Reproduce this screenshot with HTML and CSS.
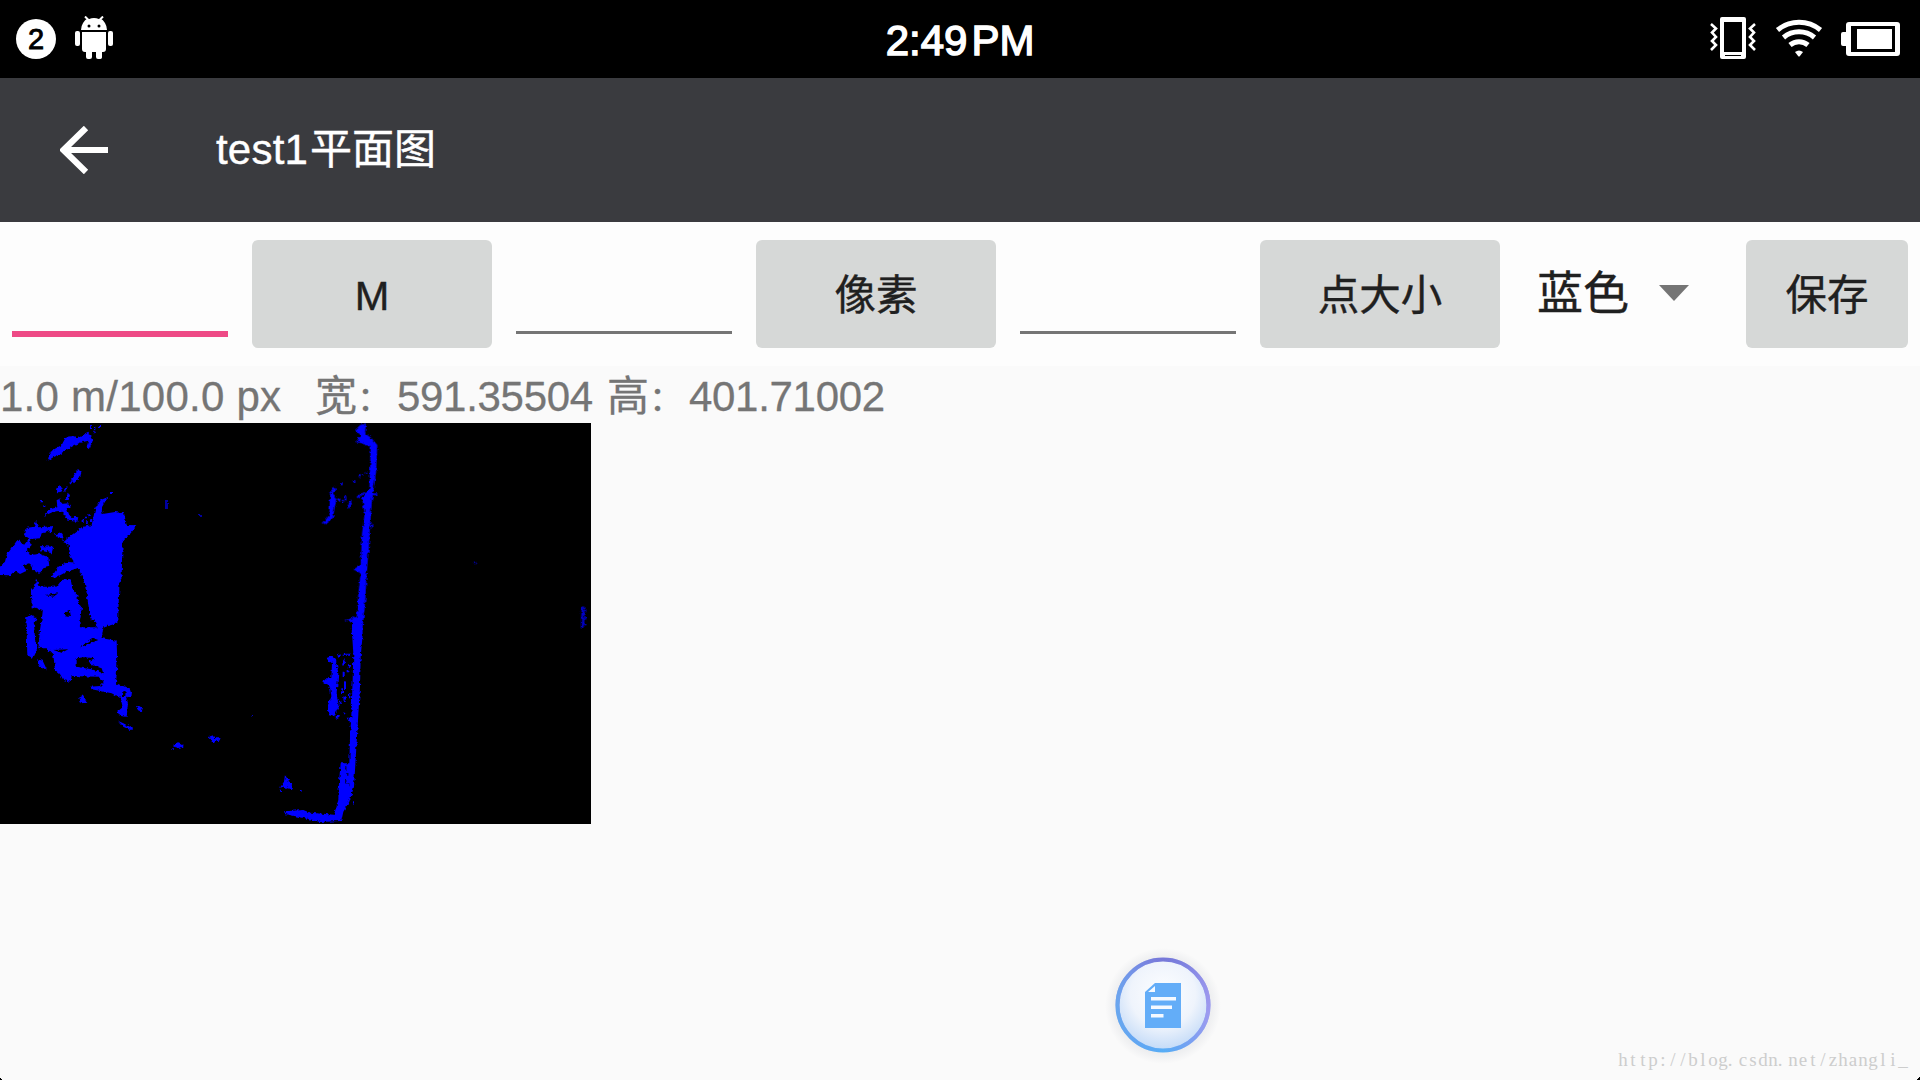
FILE: index.html
```html
<!DOCTYPE html>
<html lang="zh">
<head>
<meta charset="utf-8">
<title>test1平面图</title>
<link rel="stylesheet" href="styles.css">
</head>
<body>
<header class="status">
  <div class="status-left">
    <span class="count">2</span>
    <svg class="android" width="40" height="44" viewBox="74 16 40 44" fill="#fff">
      <path d="M82 30c0-5 3-9 6-10.500l-3-3M106 30c0-5-3-9-6-10.500l3-3" fill="none" stroke="#fff" stroke-width="2"/>
      <path d="M82 30c0-7 5-12 12-12s12 5 12 12z"/>
      <circle cx="89" cy="26" r="1.500" fill="#000"/><circle cx="99" cy="26" r="1.500" fill="#000"/>
      <path d="M82 32h24v17a3 3 0 0 1-3 3h-1v5.500a2 2 0 0 1-2 1.500h-2a2 2 0 0 1-2-2v-5h-4v5a2 2 0 0 1-2 2h-2a2 2 0 0 1-2-2v-5h-1a3 3 0 0 1-3-3z"/>
      <rect x="75" y="31" width="5" height="15" rx="2"/><rect x="108" y="31" width="5" height="15" rx="2"/>
    </svg>
  </div>
  <div class="time"><span>2:49</span><span>PM</span></div>
  <svg class="status-right" width="192" height="44" viewBox="1709 16 192 44" fill="#fff">
    <path fill-rule="evenodd" d="M1722 17h22a2 2 0 0 1 2 2v38a2 2 0 0 1-2 2h-22a2 2 0 0 1-2-2V19a2 2 0 0 1 2-2zM1724 22v30h18V22zM1725 55v1h16v-1z"/>
    <path d="M1711 24l5 4.500-4 4 4 4.500-4 4 4 4-5 5M1755 24l-5 4.500 4 4-4 4.500 4 4-4 4 5 5" fill="none" stroke="#fff" stroke-width="2.600"/>
    <g fill="none" stroke="#fff" stroke-width="5">
      <path d="M1777.500 30a34 34 0 0 1 43 0"/><path d="M1783.500 37.500a24 24 0 0 1 31 0"/><path d="M1790 45a14 14 0 0 1 18 0"/>
    </g>
    <path d="M1795 52q4-3 8 0l-3.500 4.500h-1z"/>
    <path fill-rule="evenodd" d="M1849 22h48a3 3 0 0 1 3 3v28a3 3 0 0 1-3 3h-48a3 3 0 0 1-3-3v-7h-3a2 2 0 0 1-2-2V34a2 2 0 0 1 2-2h3v-7a3 3 0 0 1 3-3zM1851 26v26h44V26z"/>
    <rect x="1857" y="29" width="35" height="20"/>
  </svg>
</header>

<nav class="appbar">
  <svg class="back" width="48" height="48" viewBox="60 126 48 48"><path d="M86 128L63.500 150L86 172M64 150H108" fill="none" stroke="#fff" stroke-width="6.200"/></svg>
  <h1><span>test1</span>平面图</h1>
</nav>

<section class="tools">
  <div class="field focused"></div>
  <button class="btn">M</button>
  <div class="field"></div>
  <button class="btn">像素</button>
  <div class="field"></div>
  <button class="btn">点大小</button>
  <div class="spinner"><span>蓝色</span><i class="caret"></i></div>
  <button class="btn save">保存</button>
</section>

<main class="content">
  <p class="info"><span class="scale">1.0 m/100.0 px</span><span class="dim-w">宽<span class="colon">：</span></span><span class="num-w">591.35504</span><span class="dim-h">高<span class="colon">：</span></span><span class="num-h">401.71002</span></p>
  <svg class="plan" width="591" height="401" viewBox="0 423 591 401">
    <defs><filter id="rough" filterUnits="userSpaceOnUse" x="0" y="423" width="591" height="401">
      <feTurbulence type="fractalNoise" baseFrequency="0.32" numOctaves="2" seed="4"/>
      <feDisplacementMap in="SourceGraphic" scale="4" xChannelSelector="R" yChannelSelector="G"/>
    </filter></defs>
    <rect y="423" width="591" height="401" fill="#000"/>
    <g fill="#00f" filter="url(#rough)">
      <!-- upper left cluster -->
      <g transform="translate(0 420) scale(.33333)">
        <path d="M143 122L150 95L185 75L198 50L225 48L232 55L265 38L278 62L270 85L260 82L265 62L240 68L225 75L195 92L175 105L160 112Z"/>
        <path d="M213 180L235 145L245 155L240 172L222 190ZM168 208L175 196L188 205L182 216L172 217ZM195 240L203 218L210 225L206 240ZM190 212l10-14 3 3-9 14zM208 192l6-10 3 3-6 10zM120 240h9v7h-9zM130 256h6v5h-6zM270 18h6v6h-6zM282 20h4v8h-4zM294 18h6v6h-6zM280 32h4v5h-4zM330 216h6v6h-6z"/>
        <path d="M132 288L150 268L172 262L170 240L178 235L182 252L205 250L212 260L200 265L210 290L235 292L232 305L205 302L185 272L160 275Z"/>
        <path d="M255 290h6v5h-6zM265 283h7v6h-7zM245 300h6v6h-6zM258 304h8v7h-8zM270 298h6v8h-6z"/>
        <path d="M72 345L76 325L102 320L108 302L118 322L160 318L155 332L125 340L120 355L90 357Z"/>
        <path d="M0 440L15 425L20 405L52 360L72 375L90 352L92 378L80 390L90 405L120 402L145 412L148 440L130 445L120 458L100 450L88 430L68 435L80 452L60 462L45 452L30 466L0 465Z"/>
        <path d="M120 378L160 380L155 400L125 392ZM162 345L185 335L192 360L178 355ZM155 470L175 440L205 425L240 430L232 445L200 455L165 474Z"/>
        <path d="M190 367L215 345L245 322L275 315L285 270L302 240L326 230L315 245L304 265L308 282L345 276L372 280L380 315L412 316L392 340L368 365L365 470L355 500L355 600L272 600L255 490L235 445L212 410L205 372Z"/>
        <path d="M93 515L105 500L108 475L120 502L175 500L188 480L212 478L218 510L232 525L235 550L245 565L240 600L130 600L128 570L98 560Z"/>
      </g>
      <!-- lower left cluster -->
      <g transform="translate(0 570) scale(.33333)">
        <path d="M248 0H358V60L352 160L310 172L306 200H290L292 175L275 130L262 75Z"/>
        <path d="M240 172L290 172L306 205L350 212L352 285L348 340L375 350L396 365L394 382L378 380L384 400L380 440L360 438L352 425L368 412L362 385L335 370L275 358L270 350L300 348L312 335L295 320L215 318L212 335L190 330L180 312L165 300L160 255L140 235L115 235L120 180L130 115L95 112L93 60L110 45L125 50L170 50L185 30L210 28L220 75L232 90L245 115L238 150Z"/>
        <path d="M75 145L90 136L112 148L102 165L106 215L112 235L98 265L82 255L80 190ZM112 267L128 272L140 298L120 290ZM235 385L250 376L262 398L242 400ZM410 408L428 412L425 424L412 418ZM355 453L370 460L398 475L390 480L370 470Z"/>
        <path fill="#000" d="M230 265L255 262L285 265L262 275L275 285L305 295L310 310L275 298L230 290ZM190 130L210 122L212 138L195 136ZM240 232L280 205L295 210L260 225ZM135 75L175 70L160 80ZM245 150L275 145L278 165L240 170ZM160 240L205 238L185 248ZM366 365L377 362L376 378L368 378Z"/>
      </g>
      <!-- wall, upper part -->
      <g transform="translate(260 420) scale(.33333)">
        <path d="M285 30L300 15L318 10L315 40L335 55L352 75L348 160L342 200L336 240L330 320L326 390L320 460L316 540L310 600L304 640H275L280 605L255 602L290 590L295 520L302 460L280 448L302 435L306 340L314 280L306 235L328 205L330 145L332 80L288 65L302 45Z"/>
        <path d="M210 220L225 200L228 208L218 220L230 232L222 275L218 295L195 312L188 310L208 285Z"/>
        <path d="M290 230L315 215V220L292 235ZM232 236h9v6h-9zM245 240h7v6h-7zM254 228h5v14h-5zM262 265L270 240H275L268 265ZM278 181h8v5h-8zM296 166h6v5h-6zM306 162h5v4h-5zM317 156h6v5h-6zM242 190h6v5h-6zM337 220h15v5h-15zM332 315h8v6h-8z"/>
        <path d="M640 425h8v7h-8z" fill="#00a"/>
        <path d="M965 560h8v50l-4 15h-7zM973 570h6v6h-6zM974 592h5v7h-5zM973 610h6v6h-6z" fill="#0000c8"/>
      </g>
      <path d="M165 500h3v9h-3zM199 514h3v2h-3z" fill="#0000a0"/>
      <!-- wall, lower part -->
      <g transform="translate(130 620) scale(.33333)">
        <path d="M667 0H697L698 45L692 110L690 200L684 300L678 400L672 500L658 545L640 575L634 603L570 606L525 595L465 582L462 574L520 570L540 578L612 584L625 540L626 500L632 430H658L660 350L664 290L668 180L670 100L666 40Z"/>
        <path fill="#000" d="M646 442h3v8h-3zM652 460h3v10h-3zM646 480h3v12h-3zM655 490h3v9h-3z"/>
        <path d="M588 115L605 108L618 120L625 160L620 220L626 260L612 290L595 285L594 255L604 230L600 200L580 190L585 175L604 175L606 130Z"/>
        <path d="M620 108l12-5v6l-10 6zM638 101h22v6h-22zM640 120l8-5-4 15-8 8zM655 135h8l-10 12zM638 155h6v16h-6zM650 150h8v7h-8zM642 185l6-5v30h-6zM634 205h5v20h-5zM640 230l7-6v22h-6zM626 245h8v6h-8zM656 220h5v16h-5zM616 290l12-5v11h-8zM640 275l9 8h-6zM650 293h16v11h-10z"/>
        <path d="M235 350L250 346L257 355H272L268 362L256 364L250 372L245 360ZM130 374L145 366L150 374H160V380L146 384L132 380ZM124 385h5v4h-5zM18 257L38 264L36 272H26ZM0 318l8 4v8l-8-2z"/>
        <path d="M364 282h5v8h-5z" fill="#00b"/>
        <path d="M465 464L474 480L486 488L485 508L460 500L450 503L462 485ZM448 509h5v4h-5zM510 510h5v5h-5zM670 546h5v5h-5z"/>
      </g>
    </g>
  </svg>
</main>

<button class="float" aria-label="note">
  <svg width="120" height="120" viewBox="1103 945 120 120">
    <defs>
      <linearGradient id="ring" x1=".55" y1="0" x2=".4" y2="1"><stop offset="0" stop-color="#7778d8"/><stop offset=".5" stop-color="#8b9bee"/><stop offset="1" stop-color="#56aef6"/></linearGradient>
      <linearGradient id="side" x1="0" y1=".5" x2="1" y2=".5"><stop offset="0" stop-color="#5ea9ee"/><stop offset=".5" stop-color="#7a90ee" stop-opacity="0"/><stop offset="1" stop-color="#a59af0"/></linearGradient>
      <radialGradient id="glass" cx=".5" cy=".38" r=".65"><stop offset="0" stop-color="#fdfeff"/><stop offset=".55" stop-color="#eff4fc"/><stop offset="1" stop-color="#bdd7f7"/></radialGradient>
      <radialGradient id="halo"><stop offset=".75" stop-color="#8890a0" stop-opacity=".16"/><stop offset="1" stop-color="#8890a0" stop-opacity="0"/></radialGradient>
    </defs>
    <circle cx="1163" cy="1006" r="58" fill="url(#halo)"/>
    <circle cx="1163" cy="1005" r="45.500" fill="url(#glass)" stroke="url(#ring)" stroke-width="4"/>
    <circle cx="1163" cy="1005" r="45.500" fill="none" stroke="url(#side)" stroke-width="4" opacity=".7"/>
    <path d="M1155 983h26v45h-36v-36z" fill="#63adf8"/>
    <path d="M1155 986v6h-7zM1151 997h25v3.500h-25zM1151 1005.500h21v3.500h-21zM1151 1014h12.500v3.500h-12.500z" fill="#f5f9ff"/>
  </svg>
</button>
<svg class="mark" width="300" height="30"><text y="20" x="5 15 25 35 45 55 65 75 85 95 105 112 125 135 145 155 162 175 185 195 205 215 225 235 245 255 265 275 285">http://blog.csdn.net/zhangli_</text></svg>
<i class="corner left"></i><i class="corner right"></i>
</body>
</html>
```

FILE: styles.css
```css
* { box-sizing: border-box; margin: 0; padding: 0; }

body {
  position: relative;
  width: 1920px;
  height: 1080px;
  overflow: hidden;
  display: flex;
  flex-direction: column;
  background: #fafafa;
  color: #1f2020;
  font: 42px/50px "Liberation Sans", "Noto Sans CJK SC", sans-serif;
}

.status {
  height: 78px;
  display: grid;
  grid-template-columns: 1fr auto 1fr;
  background: #000;
  color: #fff;
}
.status-left { display: flex; align-items: flex-start; gap: 18px; padding: 16px 0 0 16px; }
.count {
  width: 40px;
  height: 40px;
  margin-top: 3px;
  border-radius: 50%;
  background: #fff;
  color: #000;
  font-size: 29px;
  line-height: 41px;
  text-align: center;
  -webkit-text-stroke: .9px #000;
}
.time { display: flex; gap: 4px; padding-top: 16px; -webkit-text-stroke: 1.4px #fff; }
.status-right { justify-self: end; margin: 16px 19px 0 0; }

.appbar {
  height: 144px;
  display: flex;
  align-items: center;
  gap: 108px;
  padding-left: 60px;
  background: #3a3b3f;
  color: #fff;
}
.appbar h1 { font-size: 42px; font-weight: 400; line-height: 50px; -webkit-text-stroke: .4px; }
.appbar h1 span { margin-right: 2px; letter-spacing: .2px; }

.tools {
  height: 144px;
  display: flex;
  align-items: flex-start;
  gap: 24px;
  padding: 18px 12px 0;
  background: #fdfdfd;
}
.field { width: 216px; height: 94px; border-bottom: 3px solid #757575; }
.field.focused { height: 97px; border-bottom: 6px solid #ee4a86; }
.btn {
  width: 240px;
  height: 108px;
  padding-top: 3px;
  border: 0;
  border-radius: 6px;
  background: #d6d8d7;
  color: inherit;
  font: inherit;
  font-size: 41.500px;
  -webkit-text-stroke: .4px;
}
.btn.save { width: 162px; }
.spinner {
  width: 198px;
  height: 108px;
  display: flex;
  align-items: center;
  gap: 30px;
  padding: 0 0 2px 13px;
  font-size: 46px;
  -webkit-text-stroke: .4px;
}
.caret { border: 15px solid transparent; border-top: 16px solid #757575; border-bottom: 0; }

.content { flex: 1; }
.info { height: 57px; display: flex; line-height: 50px; padding-top: 6px; white-space: pre; color: #757575; -webkit-text-stroke: .3px; }
.scale { width: 315px; letter-spacing: .25px; }
.dim-w { width: 82px; }
.num-w { width: 210px; letter-spacing: -.3px; }
.dim-h { width: 82px; }
.num-h { letter-spacing: -.3px; }
.colon { font-size: 34px; }
.plan { display: block; }

.float { position: absolute; left: 1103px; top: 945px; width: 120px; height: 120px; border: 0; background: none; }
.mark { position: absolute; left: 1618px; top: 1046px; }
.mark text { font: 19px "Liberation Serif", serif; fill: #cdcdcd; text-anchor: middle; }
.corner { position: absolute; bottom: 0; width: 3px; height: 3px; }
.corner.left { left: 0; background: linear-gradient(45deg, #000 50%, transparent 50%); }
.corner.right { right: 0; background: linear-gradient(-45deg, #000 50%, transparent 50%); }
```
